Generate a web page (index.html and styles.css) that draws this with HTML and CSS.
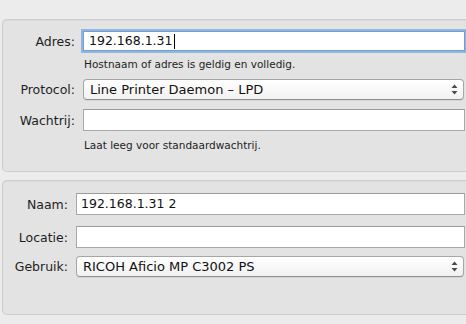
FILE: index.html
```html
<!DOCTYPE html>
<html lang="nl">

<head>
    <meta charset="UTF-8" />
    <meta name="viewport" content="width=device-width, initial-scale=1.0" />
    <title>Printer toevoegen</title>
    <link rel="stylesheet" href="styles.css">
</head>

<body>

    <div class="sheet">
        <div class="panel panel-top">
            <div class="row">
                <label class="label">Adres:</label>
                <div class="field focused">192.168.1.31<span class="caret"></span></div>
            </div>
            <div class="hint">Hostnaam of adres is geldig en volledig.</div>

            <div class="row row-protocol">
                <label class="label">Protocol:</label>
                <div class="popup">
                    <span>Line Printer Daemon – LPD</span>
                    <svg class="arrows" width="7" height="11" viewBox="0 0 7 11">
                        <path d="M3.5 0.5 L6.5 4 L0.5 4 Z" fill="#4a4a4a" />
                        <path d="M3.5 10.5 L6.5 7 L0.5 7 Z" fill="#4a4a4a" />
                    </svg>
                </div>
            </div>

            <div class="row row-queue">
                <label class="label">Wachtrij:</label>
                <div class="field tall"></div>
            </div>
            <div class="hint hint-queue">Laat leeg voor standaardwachtrij.</div>
        </div>

        <div class="panel panel-bottom">
            <div class="row">
                <label class="label">Naam:</label>
                <div class="field tall">192.168.1.31 2</div>
            </div>

            <div class="row row-location">
                <label class="label">Locatie:</label>
                <div class="field tall"></div>
            </div>

            <div class="row row-use">
                <label class="label">Gebruik:</label>
                <div class="popup">
                    <span>RICOH Aficio MP C3002 PS</span>
                    <svg class="arrows" width="7" height="11" viewBox="0 0 7 11">
                        <path d="M3.5 0.5 L6.5 4 L0.5 4 Z" fill="#4a4a4a" />
                        <path d="M3.5 10.5 L6.5 7 L0.5 7 Z" fill="#4a4a4a" />
                    </svg>
                </div>
            </div>
        </div>
    </div>

</body>

</html>
```

FILE: styles.css
```css
html,
body {
    margin: 0;
    padding: 0;
    overflow: hidden;
}

body {
    font-family: "DejaVu Sans", "Noto Sans", sans-serif;
    font-size: 12px;
    color: #1e1e1e;
    background-color: #ececec;
    width: 466px;
    height: 324px;
}

.sheet {
    padding: 19px 0 0 2px;
}

/* panels run on past the right edge of the window, so no right border */
.panel {
    background-color: #e3e3e3;
    border: 1px solid #cdcdcd;
    border-right: none;
    border-radius: 5px 0 0 5px;
    box-shadow: inset 0 1px 1px rgba(0, 0, 0, 0.04);
}

.panel-top {
    padding: 11px 0 19px 0;
    --label-w: 72px;
}

.panel-bottom {
    margin-top: 8px;
    padding: 12px 0 37px 0;
    --label-w: 65px;
}

.row {
    display: flex;
    align-items: center;
    gap: 8px;
}

.label {
    width: var(--label-w);
    flex: none;
    text-align: right;
    font-size: 12.5px;
}

.field {
    height: 18px;
    line-height: 18px;
    box-sizing: content-box;
    background: #fff;
    border: 1px solid #a9a9a9;
    border-top-color: #9a9a9a;
    padding: 0 0 0 4px;
    font-size: 12.5px;
    color: #111;
    display: flex;
    align-items: center;
}

.panel-top .field {
    width: 376px;
}

.panel-bottom .field {
    width: 383px;
}

.field.tall {
    height: 20px;
}

.field.focused {
    border-color: #6f9fd6;
    box-shadow: 0 0 0 2px rgba(120, 165, 220, 0.75);
    padding-left: 5px;
    width: 375px;
}

.caret {
    display: inline-block;
    width: 1px;
    height: 15px;
    background: #000;
    margin-left: 1px;
}

.hint {
    font-size: 10.5px;
    line-height: 14px;
    margin: 6px 0 0 81px;
}

.hint-queue {
    margin-top: 7px;
}

.row-protocol {
    margin-top: 8px;
}

.row-queue {
    margin-top: 9px;
}

.row-location {
    margin-top: 11px;
}

.row-use {
    margin-top: 8px;
}

.popup {
    height: 19px;
    box-sizing: content-box;
    display: flex;
    align-items: center;
    justify-content: space-between;
    padding: 0 5px 0 6px;
    background: linear-gradient(#ffffff, #f1f1f1);
    border: 1px solid #a6a6a6;
    border-bottom-color: #8f8f8f;
    border-radius: 4px;
    box-shadow: 0 1px 0 rgba(0, 0, 0, 0.06);
    font-size: 13px;
    color: #111;
}

.panel-top .popup {
    width: 368px;
}

.panel-bottom .popup {
    width: 375px;
}
```
